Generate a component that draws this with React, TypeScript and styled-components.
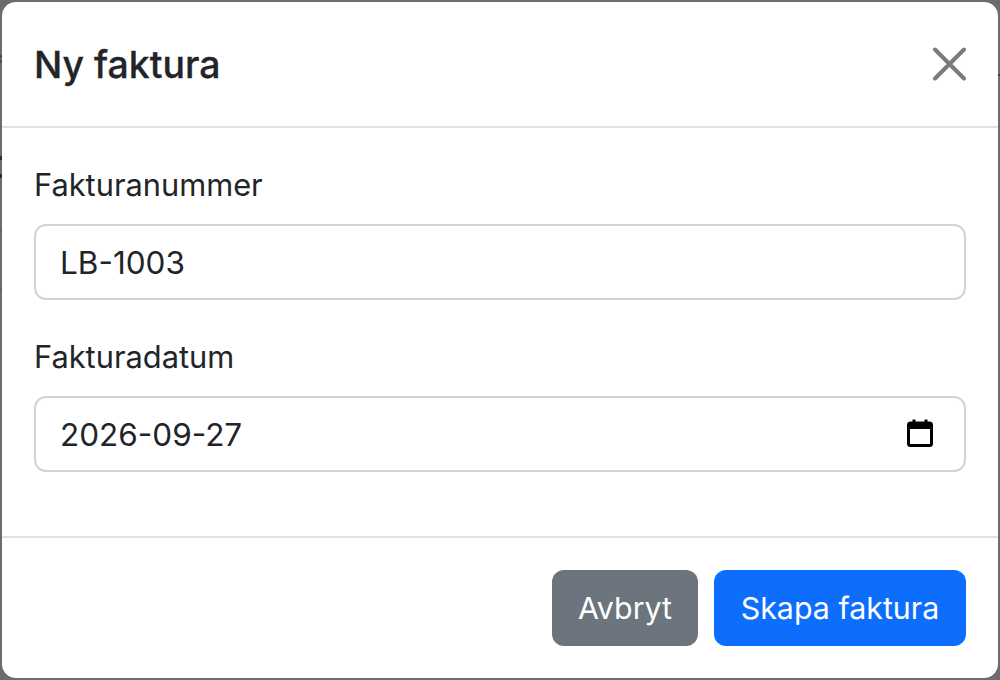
import React from "react";
import styled, { createGlobalStyle } from "styled-components";

const Global = createGlobalStyle`
  html, body { margin: 0; padding: 0; width: 1000px; height: 680px; overflow: hidden; background: #6c6c6c; }
  * { box-sizing: border-box; }
`;
const Backdrop = styled.div`
  position: relative; width: 1000px; height: 680px; padding: 2px;
  font-family: Inter, "Liberation Sans", sans-serif;
  color: #212529;
`;
const PeekMark = styled.i<{ $top: number; $h: number; $right?: boolean; $shade: string }>`
  position: absolute; width: 2px; top: ${p => p.$top}px; height: ${p => p.$h}px;
  ${p => (p.$right ? "right: 0;" : "left: 0;")}
  background: ${p => p.$shade};
`;
const Modal = styled.div`
  height: 676px; background: #fff; border-radius: 14px;
  display: flex; flex-direction: column;
`;
const Header = styled.div`
  height: 126px; flex: none; display: flex; align-items: center; justify-content: space-between;
  padding: 0 32px; border-bottom: 2px solid #dee2e6;
`;
const Title = styled.h5`
  margin: 0; padding-top: 2px; font-size: 37.4px; font-weight: 500; line-height: 48px; -webkit-text-stroke: 0.3px #212529;
`;
const Close = styled.button`
  width: 34px; height: 34px; padding: 0; border: 0; background: none; display: block;
  svg { display: block; }
`;
const Body = styled.div`
  flex: 1; padding: 32px 32px 0; display: flex; flex-direction: column; gap: 32px;
`;
const Field = styled.div`
  display: flex; flex-direction: column; gap: 16px;
`;
const Label = styled.label`
  font-size: 30.8px; line-height: 50px; height: 48px;
`;
const InputBox = styled.div`
  height: 76px; border: 2px solid #ced4da; border-radius: 12px; padding: 0 31px 0 24px;
  display: flex; align-items: center; justify-content: space-between;
  font-size: 31.5px; color: #212529;
`;
const CalendarIcon = styled.svg`
  margin-top: -2px;
`;
const Footer = styled.div`
  height: 142px; flex: none; border-top: 2px solid #dee2e6; padding: 32px;
  display: flex; justify-content: flex-end; gap: 16px;
`;
const Btn = styled.button<{ $bg: string; $w: number }>`
  width: ${p => p.$w}px; height: 76px; border: 0; border-radius: 12px; padding: 0; color: #fff;
  background: ${p => p.$bg}; font-family: inherit; font-size: 30.4px;
`;

export default function App() {
  return (
    <Backdrop>
      <Global />
      <PeekMark $top={55} $h={3} $shade="#4a4a4a" />
      <PeekMark $top={60} $h={3} $shade="#4f4f4f" />
      <PeekMark $top={156} $h={4} $shade="#2e2e2e" />
      <PeekMark $top={174} $h={4} $shade="#2e2e2e" />
      <PeekMark $top={229} $h={2} $shade="#5e5e5e" />
      <PeekMark $top={289} $h={2} $shade="#5e5e5e" />
      <PeekMark $right $top={74} $h={2} $shade="#3a3a3a" />
      <Modal>
        <Header>
          <Title>Ny faktura</Title>
          <Close aria-label="Stäng">
            <svg width="34" height="34" viewBox="0 0 34 34" fill="none" stroke="#7b7b7b" strokeWidth="4" strokeLinecap="round">
              <path d="M3 2.5 L32 31.5 M32 2.5 L3 31.5" />
            </svg>
          </Close>
        </Header>
        <Body>
          <Field>
            <Label>Fakturanummer</Label>
            <InputBox>LB-1003</InputBox>
          </Field>
          <Field>
            <Label>Fakturadatum</Label>
            <InputBox>
              2026-09-27
              <CalendarIcon width="26" height="28" viewBox="0 0 26 28" fill="none">
                <rect x="1.5" y="4" width="23" height="22.5" rx="2" stroke="#000" strokeWidth="3" />
                <rect x="1.5" y="4" width="23" height="6" fill="#000" />
                <path d="M7 0.5V5 M19 0.5V5" stroke="#000" strokeWidth="3" />
              </CalendarIcon>
            </InputBox>
          </Field>
        </Body>
        <Footer>
          <Btn $bg="#6c757d" $w={146}>Avbryt</Btn>
          <Btn $bg="#0d6efd" $w={252}>Skapa faktura</Btn>
        </Footer>
      </Modal>
    </Backdrop>
  );
}
